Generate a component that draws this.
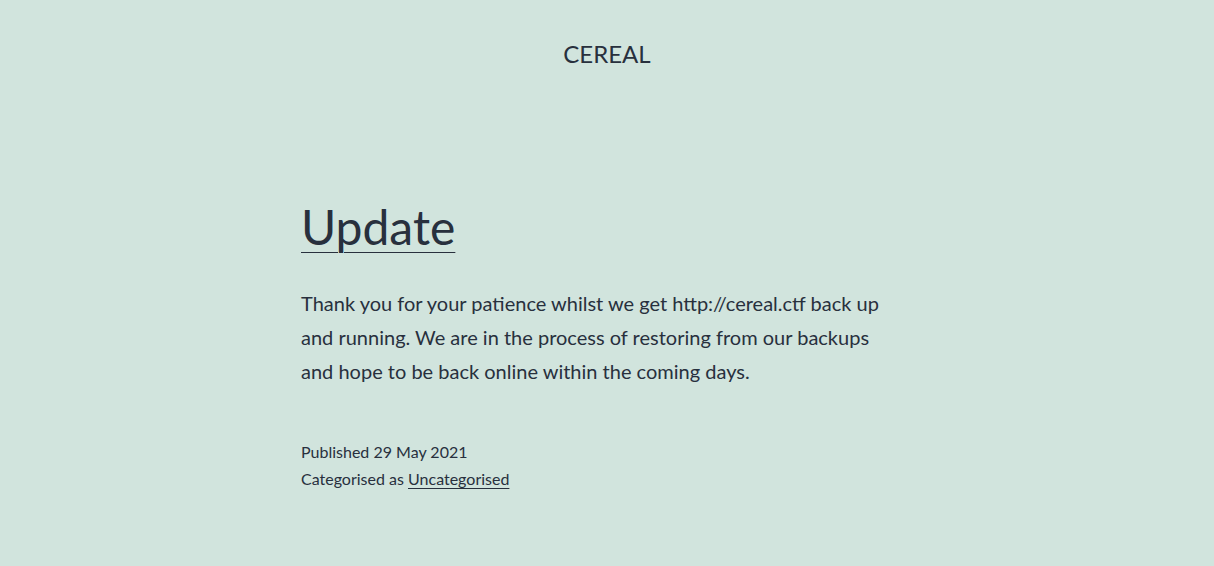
export default function App() {
  return (
    <div className="min-h-screen bg-[#d1e4dd] text-[#28303d]" style={{ fontFamily: 'Lato, sans-serif' }}>
      <header className="pt-[38px] text-center">
        <p className="text-[24px] leading-[1.3]">CEREAL</p>
      </header>

      <main className="mx-auto w-[612px] pt-[127px]">
        <h1 className="text-[48px] leading-[1.3]">
          <a href="#" className="underline decoration-1 underline-offset-[7px]">
            Update
          </a>
        </h1>

        <div className="mt-[27px] max-w-[592px] text-[20px] leading-[34px]">
          <p>
            Thank you for your patience whilst we get http://cereal.ctf back up and running. We are in the process
            of restoring from our backups and hope to be back online within the coming days.
          </p>
        </div>

        <footer className="mt-[50px] text-[16px] leading-[27px]">
          <div>Published 29 May 2021</div>
          <div>
            Categorised as{' '}
            <a href="#" className="underline decoration-1 underline-offset-[3px]">
              Uncategorised
            </a>
          </div>
        </footer>
      </main>
    </div>
  );
}
